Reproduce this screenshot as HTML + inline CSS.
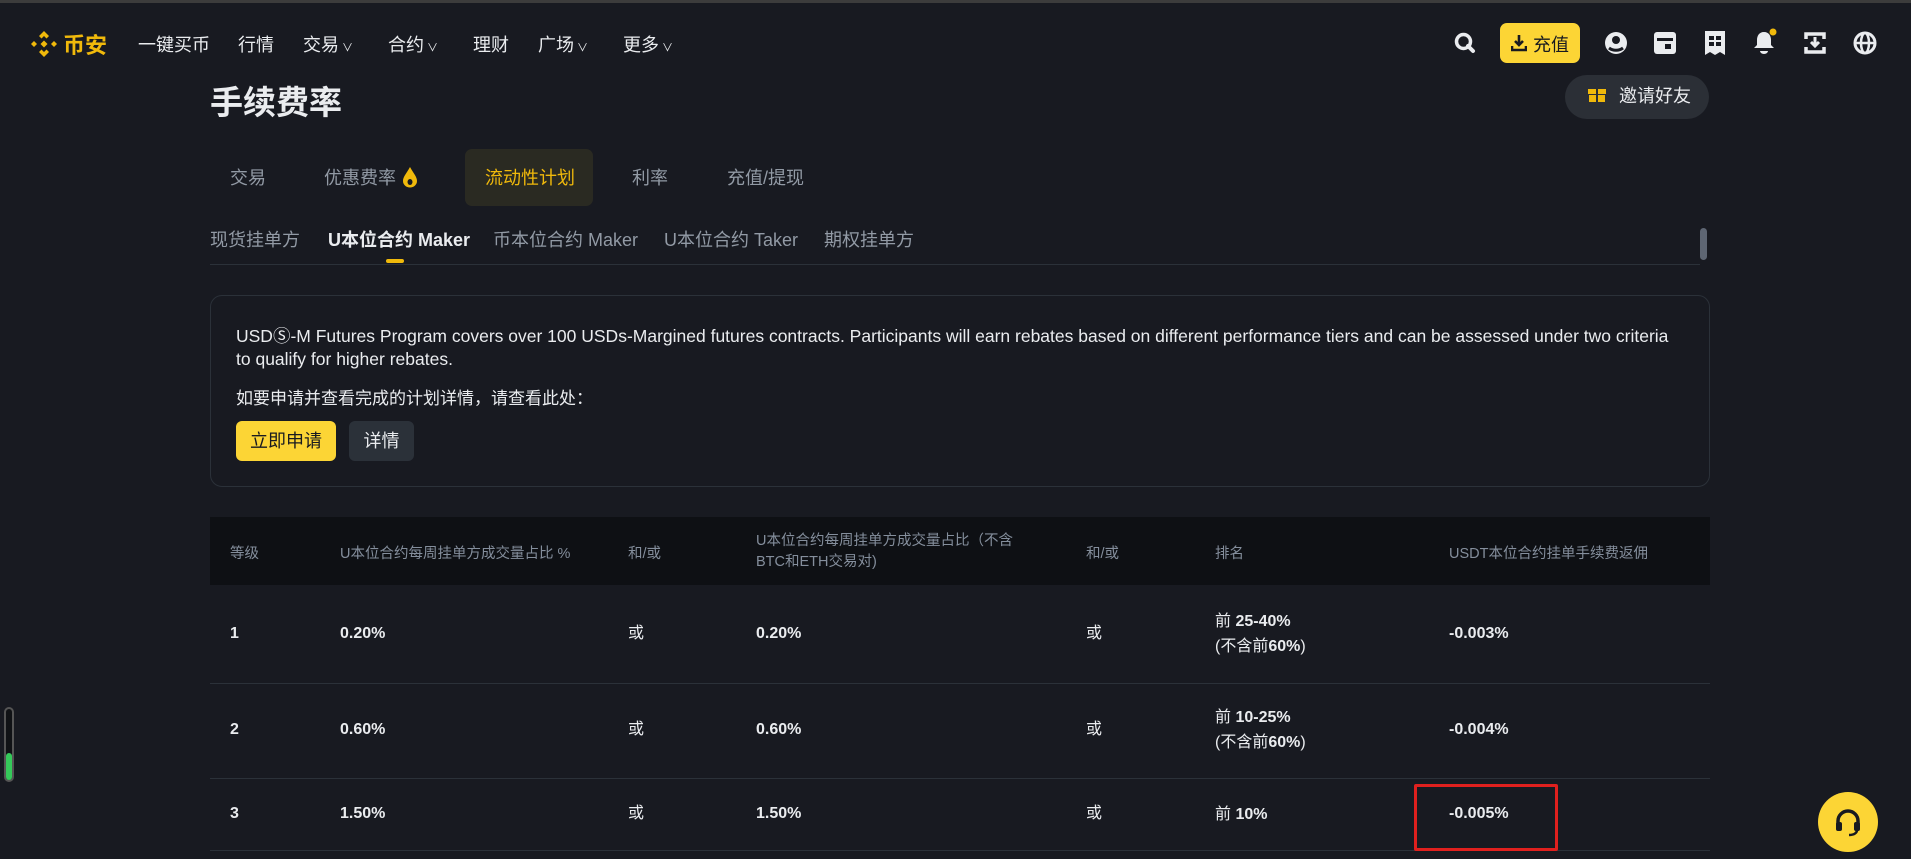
<!DOCTYPE html>
<html><head><meta charset="utf-8">
<style>
*{margin:0;padding:0;box-sizing:border-box}
body{width:1911px;height:859px;background:#181a21;overflow:hidden;position:relative;font-family:"Liberation Sans","Noto Sans CJK SC",sans-serif;color:#eaecef}
.a{position:absolute;white-space:nowrap}
.nav{font-size:18px;color:#eaecef;top:31px}
.car{font-size:11px;margin-left:3px}
.tab{font-size:18px;color:#929aa5;top:164px}
.sub{font-size:18px;color:#929aa5;top:226px}
.th{font-size:14.5px;color:#848e9c}
.td{font-size:16px;color:#eaecef;font-weight:bold}
.hl{position:absolute;left:210px;width:1500px;height:1px;background:#2b3139}
</style></head><body>
<div class="a" style="left:0;top:0;width:1911px;height:3px;background:#3c3c3c"></div>
<svg class="a" style="left:29px;top:29px" width="30" height="30" viewBox="0 0 30 30"><g fill="#f0b90b"><path d="M15 2l5 5-2.5 2.5L15 7l-2.5 2.5L10 7z"/><path d="M15 28l5-5-2.5-2.5L15 23l-2.5-2.5L10 23z"/><path d="M2 15l3-3 3 3-3 3z"/><path d="M22 15l3-3 3 3-3 3z"/><path d="M15 11.5l3.5 3.5-3.5 3.5-3.5-3.5z"/></g></svg>
<div class="a" style="left:63px;top:28px;font-size:22px;font-weight:bold;color:#f0b90b">币安</div>
<div class="a nav" style="left:138px">一键买币</div>
<div class="a nav" style="left:238px">行情</div>
<div class="a nav" style="left:303px">交易<span class="car">∨</span></div>
<div class="a nav" style="left:388px">合约<span class="car">∨</span></div>
<div class="a nav" style="left:473px">理财</div>
<div class="a nav" style="left:538px">广场<span class="car">∨</span></div>
<div class="a nav" style="left:623px">更多<span class="car">∨</span></div>
<svg class="a" style="left:1453px;top:31px" width="24" height="24" viewBox="0 0 24 24"><circle cx="10.5" cy="10.5" r="7" fill="none" stroke="#eaecef" stroke-width="3.5"/><path d="M15 15l5 5" stroke="#eaecef" stroke-width="4" stroke-linecap="round"/></svg>
<div class="a" style="left:1500px;top:23px;width:80px;height:40px;background:#fcd535;border-radius:7px"></div>
<svg class="a" style="left:1511px;top:34px" width="16" height="18" viewBox="0 0 16 18"><path d="M8 1v10M4 7l4 4 4-4" stroke="#181a20" stroke-width="2.6" fill="none"/><path d="M1 12v4h14v-4" stroke="#181a20" stroke-width="2.6" fill="none"/></svg>
<div class="a" style="left:1533px;top:31px;font-size:18px;color:#181a20">充值</div>
<svg class="a" style="left:1604px;top:31px" width="24" height="24" viewBox="0 0 24 24"><circle cx="12" cy="12" r="11" fill="#eaecef"/><circle cx="12" cy="9" r="4" fill="#181a21"/><path d="M5 17c4 3 10 3 14 0" stroke="#181a21" stroke-width="3" fill="none"/></svg>
<svg class="a" style="left:1654px;top:32px" width="22" height="22" viewBox="0 0 22 22"><rect x="0" y="0" width="22" height="22" rx="3" fill="#eaecef"/><rect x="3" y="6" width="16" height="3" fill="#181a21"/><rect x="11" y="12" width="6" height="5" fill="#181a21"/></svg>
<svg class="a" style="left:1705px;top:31px" width="20" height="24" viewBox="0 0 20 24"><path d="M0 0h20v24l-5-3-5 3-5-3-5 3z" fill="#eaecef"/><rect x="4" y="5" width="5" height="4" fill="#181a21"/><rect x="11" y="5" width="5" height="4" fill="#181a21"/><rect x="4" y="11" width="5" height="4" fill="#181a21"/><rect x="11" y="11" width="5" height="4" fill="#181a21"/></svg>
<svg class="a" style="left:1752px;top:28px" width="26" height="28" viewBox="0 0 26 28"><path d="M12 4c-5 0-7 4-7 8v5l-3 3h20l-3-3v-5c0-4-2-8-7-8z" fill="#eaecef"/><path d="M8 23h8a4 3 0 0 1-8 0z" fill="#eaecef"/><circle cx="21" cy="4" r="3.5" fill="#f0b90b"/></svg>
<svg class="a" style="left:1804px;top:32px" width="22" height="22" viewBox="0 0 22 22"><path d="M2 7V2h18v5M2 15v5h18v-5" stroke="#eaecef" stroke-width="3.5" fill="none"/><path d="M11 5v9M7 10l4 4 4-4" stroke="#eaecef" stroke-width="3" fill="none"/></svg>
<svg class="a" style="left:1853px;top:31px" width="24" height="24" viewBox="0 0 24 24"><circle cx="12" cy="12" r="10" fill="none" stroke="#eaecef" stroke-width="3"/><ellipse cx="12" cy="12" rx="4" ry="10" fill="none" stroke="#eaecef" stroke-width="2.5"/><path d="M2 12h20" stroke="#eaecef" stroke-width="2.5"/></svg>

<div class="a" style="left:210px;top:76px;font-size:33px;font-weight:bold;color:#eaecef">手续费率</div>
<div class="a" style="left:1565px;top:75px;width:144px;height:44px;background:#2b2f36;border-radius:22px"></div>
<svg class="a" style="left:1587px;top:83px" width="20" height="20" viewBox="0 0 20 20"><rect x="1" y="6" width="18" height="5" fill="#f0b90b"/><rect x="2" y="12" width="16" height="7" fill="#f0b90b"/><rect x="9" y="6" width="2" height="13" fill="#2b2f36"/></svg>
<div class="a" style="left:1619px;top:82px;font-size:18px;color:#eaecef">邀请好友</div>

<div class="a" style="left:465px;top:149px;width:128px;height:57px;background:#2a2a22;border-radius:7px"></div>
<div class="a tab" style="left:230px">交易</div>
<div class="a tab" style="left:324px">优惠费率</div>
<svg class="a" style="left:402px;top:166px" width="16" height="22" viewBox="0 0 16 22"><path d="M8 1C4 8 1 11 1 15a7 6.5 0 0 0 14 0C15 11 12 8 8 1z" fill="#f0b90b"/><ellipse cx="8" cy="16" rx="2.5" ry="3" fill="#181a21"/></svg>
<div class="a tab" style="left:485px;color:#f0b90b">流动性计划</div>
<div class="a tab" style="left:632px">利率</div>
<div class="a tab" style="left:727px">充值/提现</div>

<div class="a sub" style="left:210px">现货挂单方</div>
<div class="a sub" style="left:328px;color:#eaecef;font-weight:bold">U本位合约 Maker</div>
<div class="a sub" style="left:493px">币本位合约 Maker</div>
<div class="a sub" style="left:664px">U本位合约 Taker</div>
<div class="a sub" style="left:824px">期权挂单方</div>
<div class="a" style="left:386px;top:259px;width:18px;height:4px;background:#f0b90b;border-radius:2px"></div>
<div class="a" style="left:210px;top:264px;width:1490px;height:1px;background:#2b3139"></div>
<div class="a" style="left:1700px;top:228px;width:7px;height:32px;background:#5e6673;border-radius:4px"></div>

<div class="a" style="left:210px;top:295px;width:1500px;height:192px;border:1px solid #2b3139;border-radius:12px"></div>
<div class="a" style="left:236px;top:323px;font-size:17.5px;color:#eaecef">USDⓈ-M Futures Program covers over 100 USDs-Margined futures contracts. Participants will earn rebates based on different performance tiers and can be assessed under two criteria</div>
<div class="a" style="left:236px;top:349px;font-size:17.5px;color:#eaecef">to qualify for higher rebates.</div>
<div class="a" style="left:236px;top:384px;font-size:17px;color:#eaecef">如要申请并查看完成的计划详情，请查看此处：</div>
<div class="a" style="left:236px;top:421px;width:100px;height:40px;background:#fcd535;border-radius:6px;color:#181a20;font-size:18px;text-align:center;line-height:40px">立即申请</div>
<div class="a" style="left:349px;top:421px;width:65px;height:40px;background:#2b3139;border-radius:6px;color:#eaecef;font-size:18px;text-align:center;line-height:40px">详情</div>

<div class="a" style="left:210px;top:517px;width:1500px;height:68px;background:#0e1014"></div>
<div class="a th" style="left:230px;top:542px">等级</div>
<div class="a th" style="left:340px;top:542px">U本位合约每周挂单方成交量占比 %</div>
<div class="a th" style="left:628px;top:542px">和/或</div>
<div class="a th" style="left:756px;top:531px;line-height:21px">U本位合约每周挂单方成交量占比（不含<br>BTC和ETH交易对)</div>
<div class="a th" style="left:1086px;top:542px">和/或</div>
<div class="a th" style="left:1215px;top:542px">排名</div>
<div class="a th" style="left:1449px;top:542px">USDT本位合约挂单手续费返佣</div>

<div class="hl" style="top:683px"></div>
<div class="hl" style="top:778px"></div>
<div class="hl" style="top:850px"></div>

<div class="a td" style="left:230px;top:625px">1</div>
<div class="a td" style="left:340px;top:625px">0.20%</div>
<div class="a td" style="left:628px;top:619px;font-weight:normal">或</div>
<div class="a td" style="left:756px;top:625px">0.20%</div>
<div class="a td" style="left:1086px;top:619px;font-weight:normal">或</div>
<div class="a td" style="left:1215px;top:609px;line-height:25px;font-weight:normal">前 <b>25-40%</b><br>(不含前<b>60%</b>)</div>
<div class="a td" style="left:1449px;top:625px">-0.003%</div>

<div class="a td" style="left:230px;top:721px">2</div>
<div class="a td" style="left:340px;top:721px">0.60%</div>
<div class="a td" style="left:628px;top:715px;font-weight:normal">或</div>
<div class="a td" style="left:756px;top:721px">0.60%</div>
<div class="a td" style="left:1086px;top:715px;font-weight:normal">或</div>
<div class="a td" style="left:1215px;top:705px;line-height:25px;font-weight:normal">前 <b>10-25%</b><br>(不含前<b>60%</b>)</div>
<div class="a td" style="left:1449px;top:721px">-0.004%</div>

<div class="a td" style="left:230px;top:805px">3</div>
<div class="a td" style="left:340px;top:805px">1.50%</div>
<div class="a td" style="left:628px;top:799px;font-weight:normal">或</div>
<div class="a td" style="left:756px;top:805px">1.50%</div>
<div class="a td" style="left:1086px;top:799px;font-weight:normal">或</div>
<div class="a td" style="left:1215px;top:800px;font-weight:normal">前 <b>10%</b></div>
<div class="a td" style="left:1449px;top:805px">-0.005%</div>
<div class="a" style="left:1414px;top:784px;width:144px;height:67px;border:3px solid #e0201e;border-radius:2px"></div>

<div class="a" style="left:4px;top:707px;width:10px;height:75px;border:2px solid #555;border-radius:5px;background:#101215"></div>
<div class="a" style="left:6px;top:753px;width:6px;height:27px;background:#35c95a;border-radius:3px"></div>

<div class="a" style="left:1818px;top:792px;width:60px;height:60px;border-radius:50%;background:#fcd535"></div>
<svg class="a" style="left:1832px;top:806px" width="32" height="32" viewBox="0 0 32 32"><path d="M6 18v-3a10 10 0 0 1 20 0v3" stroke="#181a20" stroke-width="3.5" fill="none"/><rect x="4" y="16" width="6" height="9" rx="2" fill="#181a20"/><rect x="22" y="16" width="6" height="9" rx="2" fill="#181a20"/><path d="M25 24c0 3-3 5-8 5" stroke="#181a20" stroke-width="2.5" fill="none"/></svg>
</body></html>
